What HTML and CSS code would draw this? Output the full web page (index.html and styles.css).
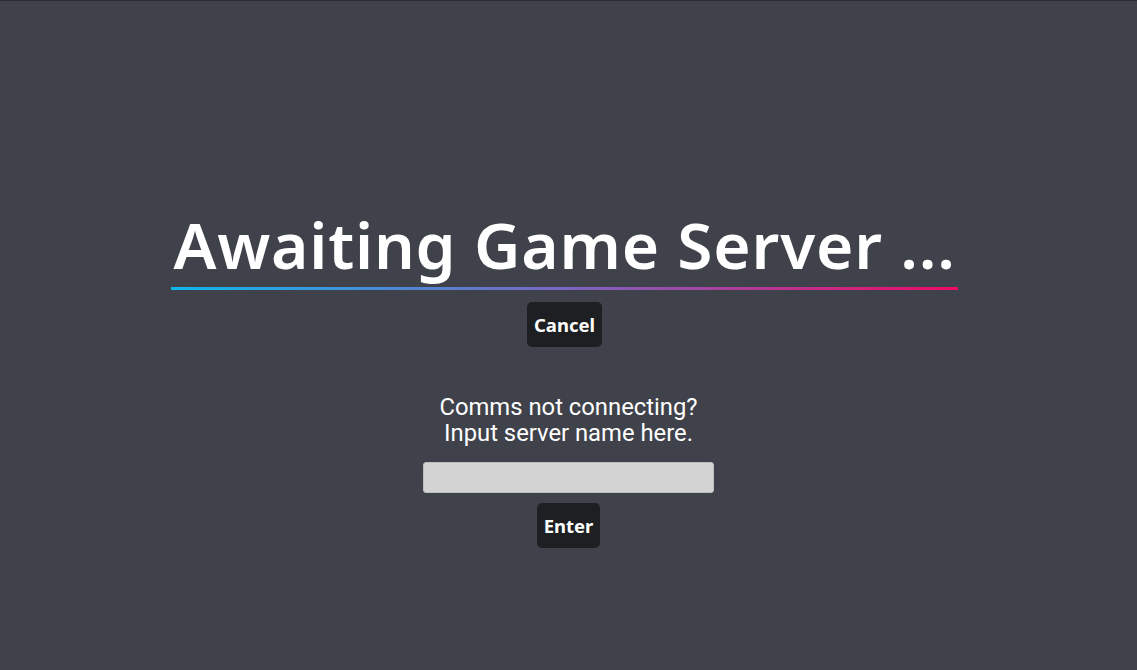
FILE: index.html
```html
<!DOCTYPE html>
<html lang="en">
<head>
  <meta charset="UTF-8">
  <meta name="viewport" content="width=device-width, initial-scale=1.0">
  <title>Awaiting Game Server</title>
  <!-- Estilos -->
  <link rel="stylesheet" href="styles.css">
</head>
<body>
  <!-- Pantalla de espera -->
  <div class="screen">
    <h1 class="title">Awaiting Game Server ...</h1>
    <button class="btn cancel">Cancel</button>

    <!-- Conexion manual -->
    <div class="manual">
      <p class="hint">Comms not connecting?<br>Input server name here.</p>
      <input type="text" class="server-input">
      <button class="btn enter">Enter</button>
    </div>
  </div>
</body>
</html>
```

FILE: styles.css
```css
/* Estilos generales */
body {
  margin: 0;
  background-color: #3f424a;
  border-top: 1px solid #2b2d31;
  min-height: 669px;
  font-family: 'Noto Sans', sans-serif;
}

/* Contenedor central */
.screen {
  display: flex;
  flex-direction: column;
  align-items: center;
  padding-top: 202px;
}

/* Titulo con subrayado degradado */
.title {
  margin: 0 8px 0 0;
  color: #fff;
  font-size: 64px;
  font-weight: 600;
  letter-spacing: 0.8px;
  line-height: 84px;
  padding: 0 2px;
  border-bottom: 3px solid transparent;
  border-image: linear-gradient(to right, #0fb8ec, #7a66c4 50%, #f00a66) 1;
}

/* Botones */
.btn {
  background-color: #1e1f22;
  color: #fff;
  border: none;
  border-radius: 5px;
  font-family: 'Noto Sans', sans-serif;
  font-size: 18.5px;
  font-weight: 700;
  height: 45px;
  padding: 0 7px;
  cursor: pointer;
}

.cancel {
  margin: 12px 8px 0 0;
}

/* Bloque manual */
.manual {
  display: flex;
  flex-direction: column;
  align-items: center;
  margin-top: 47px;
}

.hint {
  margin: 0;
  color: #fff;
  font-family: Roboto, sans-serif;
  font-size: 23.8px;
  line-height: 26px;
  text-align: center;
}

.server-input {
  width: 291px;
  height: 31px;
  box-sizing: border-box;
  margin-top: 16px;
  background-color: #d3d3d3;
  border: 1px solid #bfbfbf;
  border-radius: 3px;
}

.enter {
  margin-top: 10px;
}
```
